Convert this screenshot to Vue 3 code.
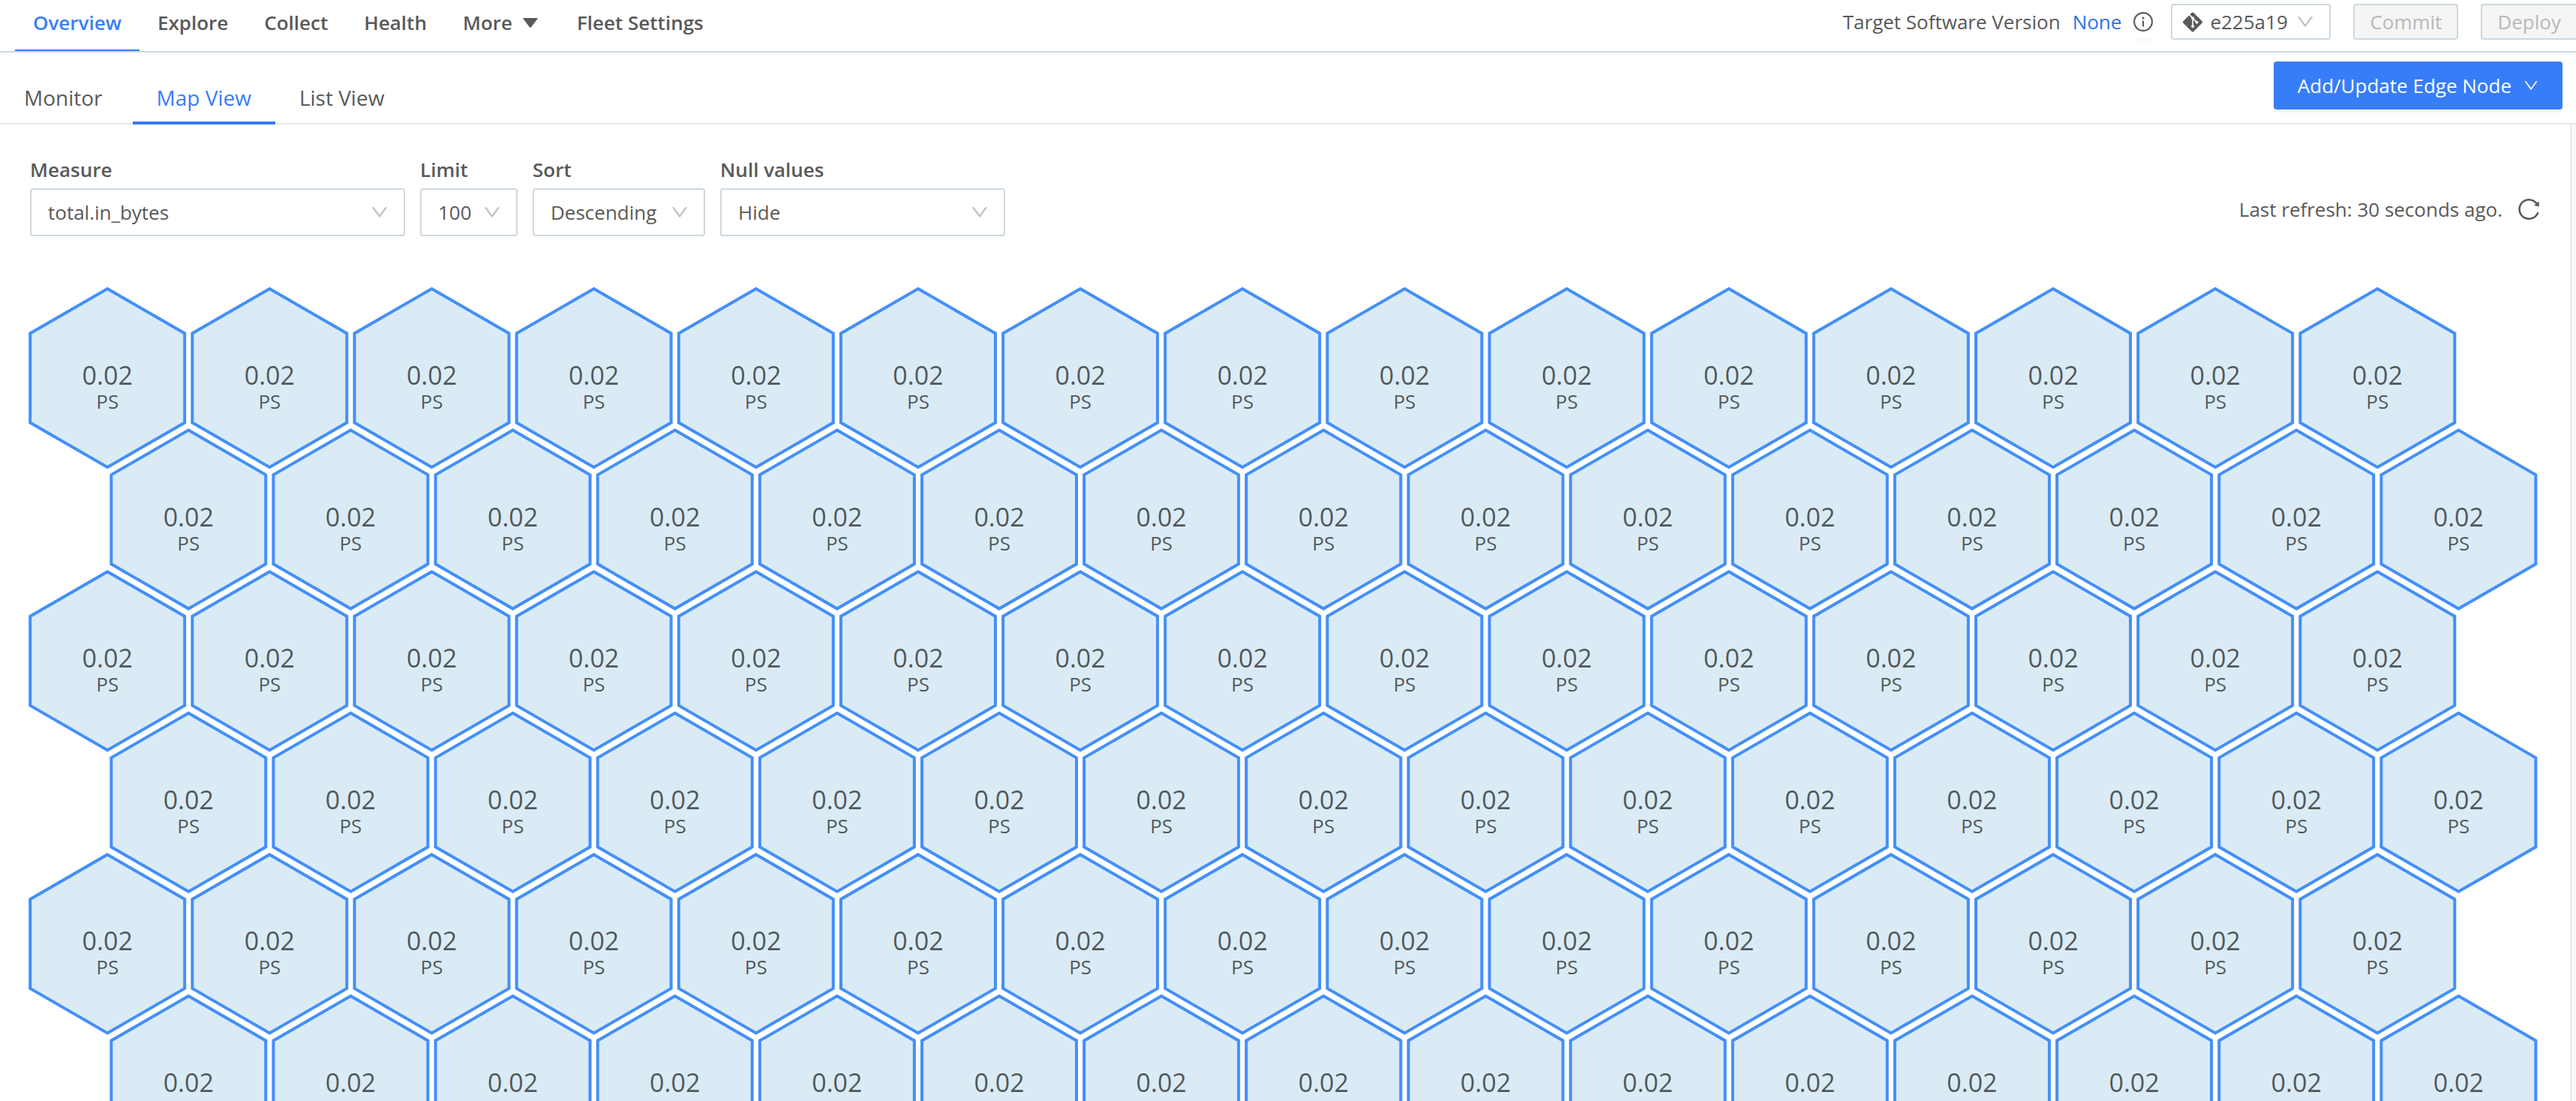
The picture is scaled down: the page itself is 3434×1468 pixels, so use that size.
<script setup>
import { ref } from 'vue'

const DOWN =
  'M884 256h-75c-5.1 0-9.9 2.5-12.9 6.6L512 654.2 227.9 262.6c-3-4.1-7.8-6.6-12.9-6.6h-75c-6.5 0-10.3 7.4-6.5 12.7l352.6 486.1c12.8 17.6 39 17.6 51.7 0l352.6-486.1c3.9-5.3.1-12.7-6.4-12.7z'

const navItems = ['Overview', 'Explore', 'Collect', 'Health', 'More', 'Fleet Settings']
const tabs = ['Monitor', 'Map View', 'List View']

const filters = [
  { id: 'measure', label: 'Measure', value: 'total.in_bytes' },
  { id: 'limit', label: 'Limit', value: '100' },
  { id: 'sort', label: 'Sort', value: 'Descending' },
  { id: 'nulls', label: 'Null values', value: 'Hide' },
]

const activeNav = ref('Overview')
const activeTab = ref('Map View')

// Honeycomb geometry, in the units of the map's viewBox
const COLS = 15
const ROWS = 6
const RADIUS = 119
const HALF = 103
const STEP_X = 216.15
const STEP_Y = 188.6
const mapWidth = 3348
const nodes = Array.from({ length: COLS * ROWS }, (_, i) => {
  const row = Math.floor(i / COLS)
  const col = i % COLS
  return {
    id: i,
    x: 105.2 + col * STEP_X + (row % 2) * (STEP_X / 2),
    y: 122 + row * STEP_Y,
    value: '0.02',
    unit: 'PS',
  }
})
const mapHeight = 1188
const hexPoints = [
  [0, -RADIUS],
  [HALF, -RADIUS / 2],
  [HALF, RADIUS / 2],
  [0, RADIUS],
  [-HALF, RADIUS / 2],
  [-HALF, -RADIUS / 2],
].map((p) => p.join(',')).join(' ')
</script>

<template>
  <div class="app">
    <header class="topbar">
      <nav class="nav">
        <a
          v-for="item in navItems"
          :key="item"
          href="#"
          class="nav-item"
          :class="{ active: item === activeNav }"
          @click.prevent="activeNav = item"
        >
          {{ item }}
          <svg v-if="item === 'More'" class="caret" viewBox="0 0 20 13" aria-hidden="true">
            <path d="M1 0h18q1 0 .6 1L11 12.200q-1 1-2 0L.4 1Q0 0 1 0z" />
          </svg>
        </a>
      </nav>
      <div class="version">
        <span class="version-label">Target Software Version</span>
        <a href="#" class="version-link">None</a>
        <button type="button" class="info" aria-label="About target version">
          <svg viewBox="0 0 26 26" aria-hidden="true">
            <circle cx="13" cy="13" r="11.900" fill="none" stroke="currentColor" stroke-width="2.100" />
            <circle cx="13" cy="8" r="1.500" />
            <path d="M12 11.500h2v8h-2z" />
          </svg>
        </button>
        <div class="select commit-select">
          <svg class="git" viewBox="0 24 448 464" aria-hidden="true">
            <path d="M439.55 236.05L244 40.45a28.87 28.87 0 0 0-40.81 0l-40.66 40.63 51.52 51.52c27.06-9.14 52.68 16.77 43.39 43.68l49.66 49.66c34.23-11.8 61.18 31 35.47 56.69-26.49 26.49-70.21-2.87-56-37.34L240.22 199v121.85c25.3 12.54 22.26 41.85 9.08 55a34.34 34.34 0 0 1-48.55 0c-17.57-17.6-11.07-46.91 11.25-56v-123c-20.8-8.51-24.6-30.74-18.64-45L142.57 101 8.45 235.14a28.86 28.86 0 0 0 0 40.81l195.61 195.6a28.86 28.86 0 0 0 40.8 0l194.69-194.69a28.86 28.86 0 0 0 0-40.81z" />
          </svg>
          <select aria-label="Commit version">
            <option>e225a19</option>
          </select>
          <svg class="down" viewBox="64 64 896 896" aria-hidden="true"><path :d="DOWN" /></svg>
        </div>
        <button type="button" class="action" disabled>Commit</button>
        <button type="button" class="action" disabled>Deploy</button>
      </div>
    </header>

    <div class="subbar">
      <nav class="tabs">
        <a
          v-for="tab in tabs"
          :key="tab"
          href="#"
          class="tab"
          :class="{ active: tab === activeTab }"
          @click.prevent="activeTab = tab"
        >{{ tab }}</a>
      </nav>
      <button type="button" class="primary">
        Add/Update Edge Node
        <svg class="down" viewBox="64 64 896 896" aria-hidden="true"><path :d="DOWN" /></svg>
      </button>
    </div>

    <main class="panel">
      <div class="toolbar">
        <div class="filters">
          <div v-for="f in filters" :key="f.id" class="field" :class="f.id">
            <label :for="f.id">{{ f.label }}</label>
            <div class="select">
              <select :id="f.id">
                <option>{{ f.value }}</option>
              </select>
              <svg class="down" viewBox="64 64 896 896" aria-hidden="true"><path :d="DOWN" /></svg>
            </div>
          </div>
        </div>
        <div class="refresh">
          <span>Last refresh: 30 seconds ago.</span>
          <button type="button" class="reload" aria-label="Refresh">
            <svg viewBox="64 64 896 896" aria-hidden="true">
              <path d="M909.1 209.3l-56.4 44.1C775.8 155.1 656.2 92 521.9 92 290 92 102.3 279.5 102 511.5 101.7 743.7 289.8 932 521.9 932c181.3 0 335.8-115 394.6-276.1 1.5-4.2-.7-8.9-4.9-10.3l-56.7-19.5a8 8 0 0 0-10.1 4.8c-1.8 5-3.8 10-5.9 14.9-17.3 41-42.1 77.8-73.7 109.4A344.77 344.77 0 0 1 655.9 829c-42.3 17.9-87.4 27-133.8 27-46.5 0-91.5-9.1-133.8-27A341.5 341.5 0 0 1 279 755.2a342.16 342.16 0 0 1-73.7-109.4c-17.9-42.4-27-87.4-27-133.9s9.1-91.5 27-133.9c17.3-41 42.1-77.8 73.7-109.4 31.6-31.6 68.4-56.4 109.3-73.8 42.3-17.9 87.4-27 133.8-27 46.5 0 91.5 9.1 133.8 27a341.5 341.5 0 0 1 109.3 73.8c9.9 9.9 19.2 20.4 27.8 31.4l-60.2 47a8 8 0 0 0 3 14.1l175.6 43c5 1.2 9.9-2.6 9.9-7.7l.8-180.9c-.1-6.6-7.8-10.3-13-6.2z" />
            </svg>
          </button>
        </div>
      </div>

      <svg class="map" :viewBox="`0 0 ${mapWidth} ${mapHeight}`">
        <g v-for="n in nodes" :key="n.id" :transform="`translate(${n.x} ${n.y})`">
          <polygon class="hex" :points="hexPoints" />
          <text class="value" y="9">{{ n.value }}</text>
          <text class="unit" y="41">{{ n.unit }}</text>
        </g>
      </svg>
    </main>
  </div>
</template>

<style>
body {
  margin: 0;
  background: #fff;
}
</style>

<style scoped>
.app {
  display: flex;
  flex-direction: column;
  height: 100vh;
  overflow: hidden;
  color: #595959;
  font: 26px/36px "Open Sans", "Noto Sans", sans-serif;
}

.app *,
.app *::before,
.app *::after {
  box-sizing: border-box;
}

a {
  color: inherit;
  text-decoration: none;
}

svg {
  display: block;
  fill: currentColor;
}

button,
select {
  font: inherit;
  color: inherit;
}

/* Top bar */
.topbar {
  display: flex;
  flex: none;
  justify-content: space-between;
  height: 70px;
  overflow: hidden;
  border-bottom: 2px solid #ced8e0;
}

.nav {
  display: flex;
  height: 70px;
  padding-left: 20px;
}

.nav-item {
  display: flex;
  gap: 14px;
  height: 70px;
  padding: 12px 24px 0;
  border-bottom: 4px solid transparent;
  font-weight: 600;
}

.nav-item.active {
  color: #377df7;
  border-color: #377df7;
}

.caret {
  width: 20px;
  height: 13px;
  margin: 12px 4px 0 0;
}

.version {
  display: flex;
  align-items: center;
  height: 48px;
  margin: 5px -2px 0 0;
}

.version-link {
  margin: 0 16px;
  color: #2f73e8;
}

.info,
.reload {
  padding: 0;
  border: 0;
  background: none;
}

.info {
  height: 44px;
  margin-right: 24px;
  box-shadow: 0 4px 0 rgba(0, 0, 0, 0.015);
}

.info svg {
  width: 26px;
  height: 26px;
}

.action {
  height: 48px;
  margin-left: 30px;
  padding: 0 20px;
  border: 2px solid #ced8e0;
  border-radius: 4px;
  background: #f5f5f5;
  color: #b8b8b8;
  line-height: 36px;
}

/* Selects */
.select {
  display: grid;
  align-items: center;
}

.select > * {
  grid-area: 1 / 1;
}

.select select {
  width: 100%;
  height: 64px;
  padding: 0 22px;
  border: 2px solid #ced8e0;
  border-radius: 4px;
  background: #fff;
  appearance: none;
  line-height: 36px;
}

.down {
  width: 24px;
  height: 24px;
}

.select .down {
  justify-self: end;
  margin-right: 22px;
  color: #bfbfbf;
  pointer-events: none;
}

.commit-select {
  width: 213px;
}

.commit-select select {
  height: 48px;
  padding: 0 50px;
}

.git {
  z-index: 1;
  width: 26px;
  height: 27px;
  margin-left: 16px;
  pointer-events: none;
}

/* Sub bar */
.subbar {
  display: flex;
  flex: none;
  justify-content: space-between;
  height: 96px;
  border-bottom: 2px solid #e8e8e8;
}

.tabs {
  display: flex;
  font-size: 28px;
}

.tab {
  height: 96px;
  padding: 42px 32px 0;
  border-bottom: 4px solid transparent;
}

.tab:first-child {
  margin-right: 8px;
}

.tab.active {
  color: #377df7;
  border-color: #377df7;
  font-weight: 500;
}

.primary {
  display: flex;
  align-items: center;
  gap: 16px;
  height: 64px;
  margin: 12px 18px 0 0;
  padding: 0 32px;
  border: 0;
  border-radius: 4px;
  background: #377df7;
  box-shadow: 0 4px 0 rgba(0, 0, 0, 0.045);
  color: #fff;
  font-weight: 500;
}

.primary .down {
  width: 20px;
  height: 20px;
}

/* Panel */
.panel {
  flex: 1;
  min-height: 0;
  margin-right: 6px;
  padding: 42px 40px 0 38px;
  overflow: hidden;
  border-right: 2px solid #e8e8e8;
  box-shadow: 6px 0 0 #fafafa;
}

.toolbar {
  display: flex;
  align-items: flex-end;
  justify-content: space-between;
  padding-left: 2px;
}

.filters {
  display: flex;
  gap: 20px;
}

.field label {
  display: block;
  margin-bottom: 7px;
  font-weight: 600;
}

.measure {
  width: 500px;
}

.limit {
  width: 130px;
}

.sort {
  width: 230px;
}

.nulls {
  width: 380px;
}

.refresh {
  display: flex;
  align-items: center;
  gap: 20px;
  height: 72px;
}

.reload svg {
  width: 30px;
  height: 30px;
}

/* Hexagon map */
.map {
  width: 100%;
  margin-top: 67px;
}

.hex {
  fill: #daebf5;
  stroke: #438ffa;
  stroke-width: 4px;
}

.map text {
  fill: rgba(0, 0, 0, 0.65);
  text-anchor: middle;
}

.value {
  font-size: 34px;
}

.unit {
  font-size: 26px;
}
</style>
